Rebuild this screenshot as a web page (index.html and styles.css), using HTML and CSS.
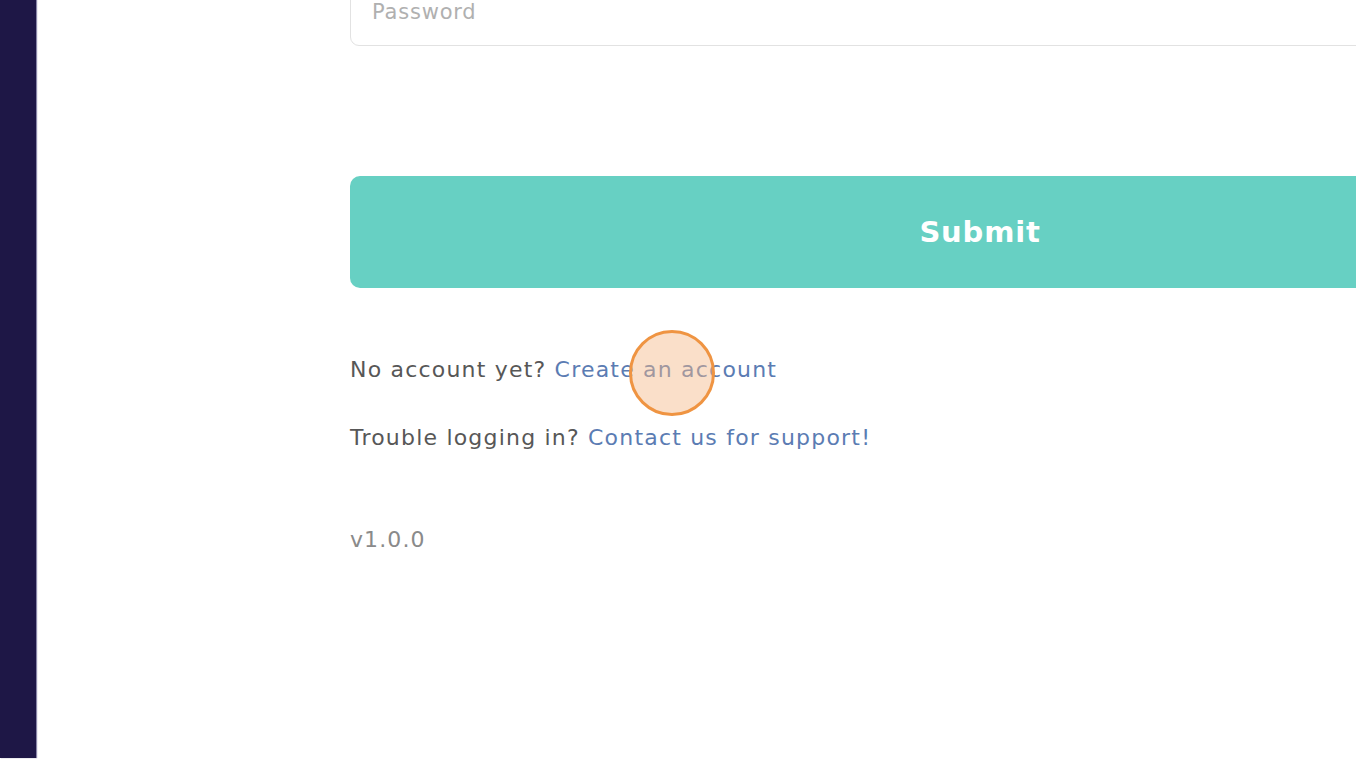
FILE: index.html
```html
<!DOCTYPE html>
<html lang="en">
<head>
    <meta charset="UTF-8">
    <meta name="viewport" content="width=device-width, initial-scale=1.0">
    <title>Login</title>
    <link rel="stylesheet" href="styles.css">
</head>
<body>
    <div class="sidebar"></div>
    <main class="main">
        <form class="login-form">
            <input class="login-input" type="password" placeholder="Password">
            <button class="login-submit" type="button">Submit</button>
            <p class="login-note">No account yet? <a href="#">Create an account</a></p>
            <p class="login-note">Trouble logging in? <a href="#">Contact us for support!</a></p>
            <div class="login-version">v1.0.0</div>
        </form>
    </main>
    <div class="click-marker"></div>
</body>
</html>
```

FILE: styles.css
```css
html, body { margin: 0; padding: 0; width: 100%; height: 100%; overflow: hidden; background: #fff; font-family: "DejaVu Sans", sans-serif; }
body { display: flex; align-items: flex-start; }
.sidebar { flex: 0 0 36px; height: 758px; background: #1e1746; box-shadow: 1px 0 1px #8a86a8; }
.main { flex: 1; padding-left: 314px; min-width: 0; }
.login-form { width: 1260px; margin-top: -22px; display: flex; flex-direction: column; }
.login-input {
    height: 68px; box-sizing: border-box; border: 1px solid #e2e2e2; border-radius: 9px; padding: 0 21px;
    font-family: inherit; font-size: 21px; letter-spacing: 0.8px; color: #333; outline: none;
}
.login-input::placeholder { color: #b0b0b0; }
.login-submit {
    margin-top: 130px; height: 112px; border: 0; border-radius: 10px; background: #67d0c3;
    color: #fff; font-family: inherit; font-size: 29px; font-weight: bold; letter-spacing: 0.8px; cursor: pointer;
}
.login-note { margin: 0; font-size: 22px; letter-spacing: 1.2px; color: #575757; line-height: 28px; }
.login-note:first-of-type { margin-top: 68px; }
.login-note + .login-note { margin-top: 40px; }
.login-note a { color: #5b7cb3; text-decoration: none; }
.login-version { margin-top: 74px; font-size: 22px; letter-spacing: 1.1px; color: #8a8a8a; line-height: 28px; }
.click-marker {
    position: absolute; left: 629px; top: 330px; width: 80px; height: 80px; border-radius: 50%;
    border: 3px solid #ef9442; background: rgba(245, 185, 135, 0.45);
}
```
